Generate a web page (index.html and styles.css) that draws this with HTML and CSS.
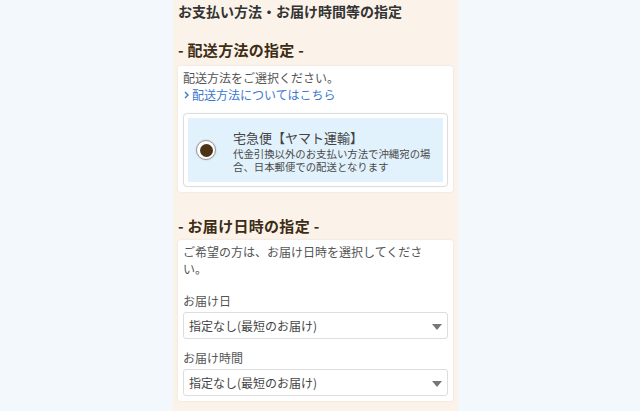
FILE: index.html
```html
<!DOCTYPE html>
<html lang="ja">
<head>
    <meta charset="UTF-8">
    <meta name="viewport" content="width=device-width, initial-scale=1.0">
    <title>お支払い方法・お届け時間等の指定</title>
    <link rel="stylesheet" href="styles.css">
</head>
<body>
    <div class="page">
        <h1 class="page-title">お支払い方法・お届け時間等の指定</h1>

        <h2 class="section-title">- 配送方法の指定 -</h2>
        <div class="card">
            <p class="note">配送方法をご選択ください。</p>
            <a class="link" href="#">
                <svg class="chevron" width="5" height="8" viewBox="0 0 5 8"><path d="M1 1 L4 4 L1 7" fill="none" stroke="#3b78d0" stroke-width="1.4"/></svg>
                配送方法についてはこちら
            </a>
            <div class="option">
                <label class="option-inner">
                    <span class="radio"><span class="radio-dot"></span></span>
                    <span class="option-text">
                        <span class="option-name">宅急便【ヤマト運輸】</span>
                        <span class="option-desc">代金引換以外のお支払い方法で沖縄宛の場合、日本郵便での配送となります</span>
                    </span>
                </label>
            </div>
        </div>

        <h2 class="section-title second">- お届け日時の指定 -</h2>
        <div class="card">
            <p class="note">ご希望の方は、お届け日時を選択してください。</p>
            <div class="field">
                <div class="field-label">お届け日</div>
                <div class="select">指定なし(最短のお届け)<span class="arrow"></span></div>
            </div>
            <div class="field">
                <div class="field-label">お届け時間</div>
                <div class="select">指定なし(最短のお届け)<span class="arrow"></span></div>
            </div>
        </div>
    </div>
</body>
</html>
```

FILE: styles.css
```css
body {
    margin: 0;
    background-color: #f3f8fd;
    font-family: "Noto Sans CJK JP", "Noto Sans", sans-serif;
    color: #555;
}
.page {
    width: 285px;
    margin-left: 173px;
    min-height: 411px;
    background-color: #fbf3ea;
    padding: 1px 5px 10px 5px;
    box-sizing: border-box;
}
.page-title {
    margin: 0;
    font-size: 14px;
    line-height: 20px;
    color: #333;
}
.section-title {
    margin: 17px 0 4px 0;
    font-size: 15px;
    line-height: 24px;
    color: #3e2c15;
    letter-spacing: 0.3px;
}
.section-title.second {
    margin-top: 22px;
    margin-bottom: 2px;
}
.card {
    background: white;
    border-radius: 3px;
    padding: 3px 5px 5px 5px;
    box-shadow: 0 0 3px rgba(0, 0, 0, 0.08);
}
.note {
    margin: 0;
    font-size: 12px;
    line-height: 17px;
    padding-right: 8px;
}
.link {
    display: flex;
    align-items: center;
    gap: 3px;
    font-size: 12px;
    line-height: 18px;
    color: #3b78d0;
    text-decoration: none;
}
.chevron {
    margin-left: 1px;
}
.option {
    margin-top: 9px;
    border: 1px solid #ddd;
    border-radius: 4px;
    padding: 4px;
    box-shadow: 0 0 2px rgba(0, 0, 0, 0.06);
}
.option-inner {
    display: flex;
    align-items: center;
    background-color: #e2f2fd;
    height: 64px;
    padding: 0 10px 0 8px;
}
.radio {
    flex: none;
    width: 18px;
    height: 18px;
    border: 1px solid #999;
    border-radius: 50%;
    background: white;
    display: flex;
    align-items: center;
    justify-content: center;
    margin-right: 17px;
    box-shadow: 0 0 2px rgba(0, 0, 0, 0.2);
}
.radio-dot {
    width: 13px;
    height: 13px;
    border-radius: 50%;
    background-color: #4d3316;
}
.option-text {
    display: flex;
    flex-direction: column;
}
.option-name {
    font-size: 13px;
    line-height: 19px;
    color: #444;
}
.option-desc {
    font-size: 10.4px;
    line-height: 13px;
    color: #4a4a4a;
}
.field {
    margin-top: 15px;
}
.field + .field {
    margin-top: 10px;
}
.field-label {
    font-size: 12px;
    line-height: 17px;
}
.select {
    position: relative;
    margin-top: 3px;
    height: 27px;
    line-height: 26px;
    border: 1px solid #ddd;
    border-radius: 3px;
    padding: 0 5px;
    font-size: 12px;
    color: #444;
    box-sizing: border-box;
}
.arrow {
    position: absolute;
    right: 5px;
    top: 11px;
    border-left: 5px solid transparent;
    border-right: 5px solid transparent;
    border-top: 6px solid #777;
}
```
